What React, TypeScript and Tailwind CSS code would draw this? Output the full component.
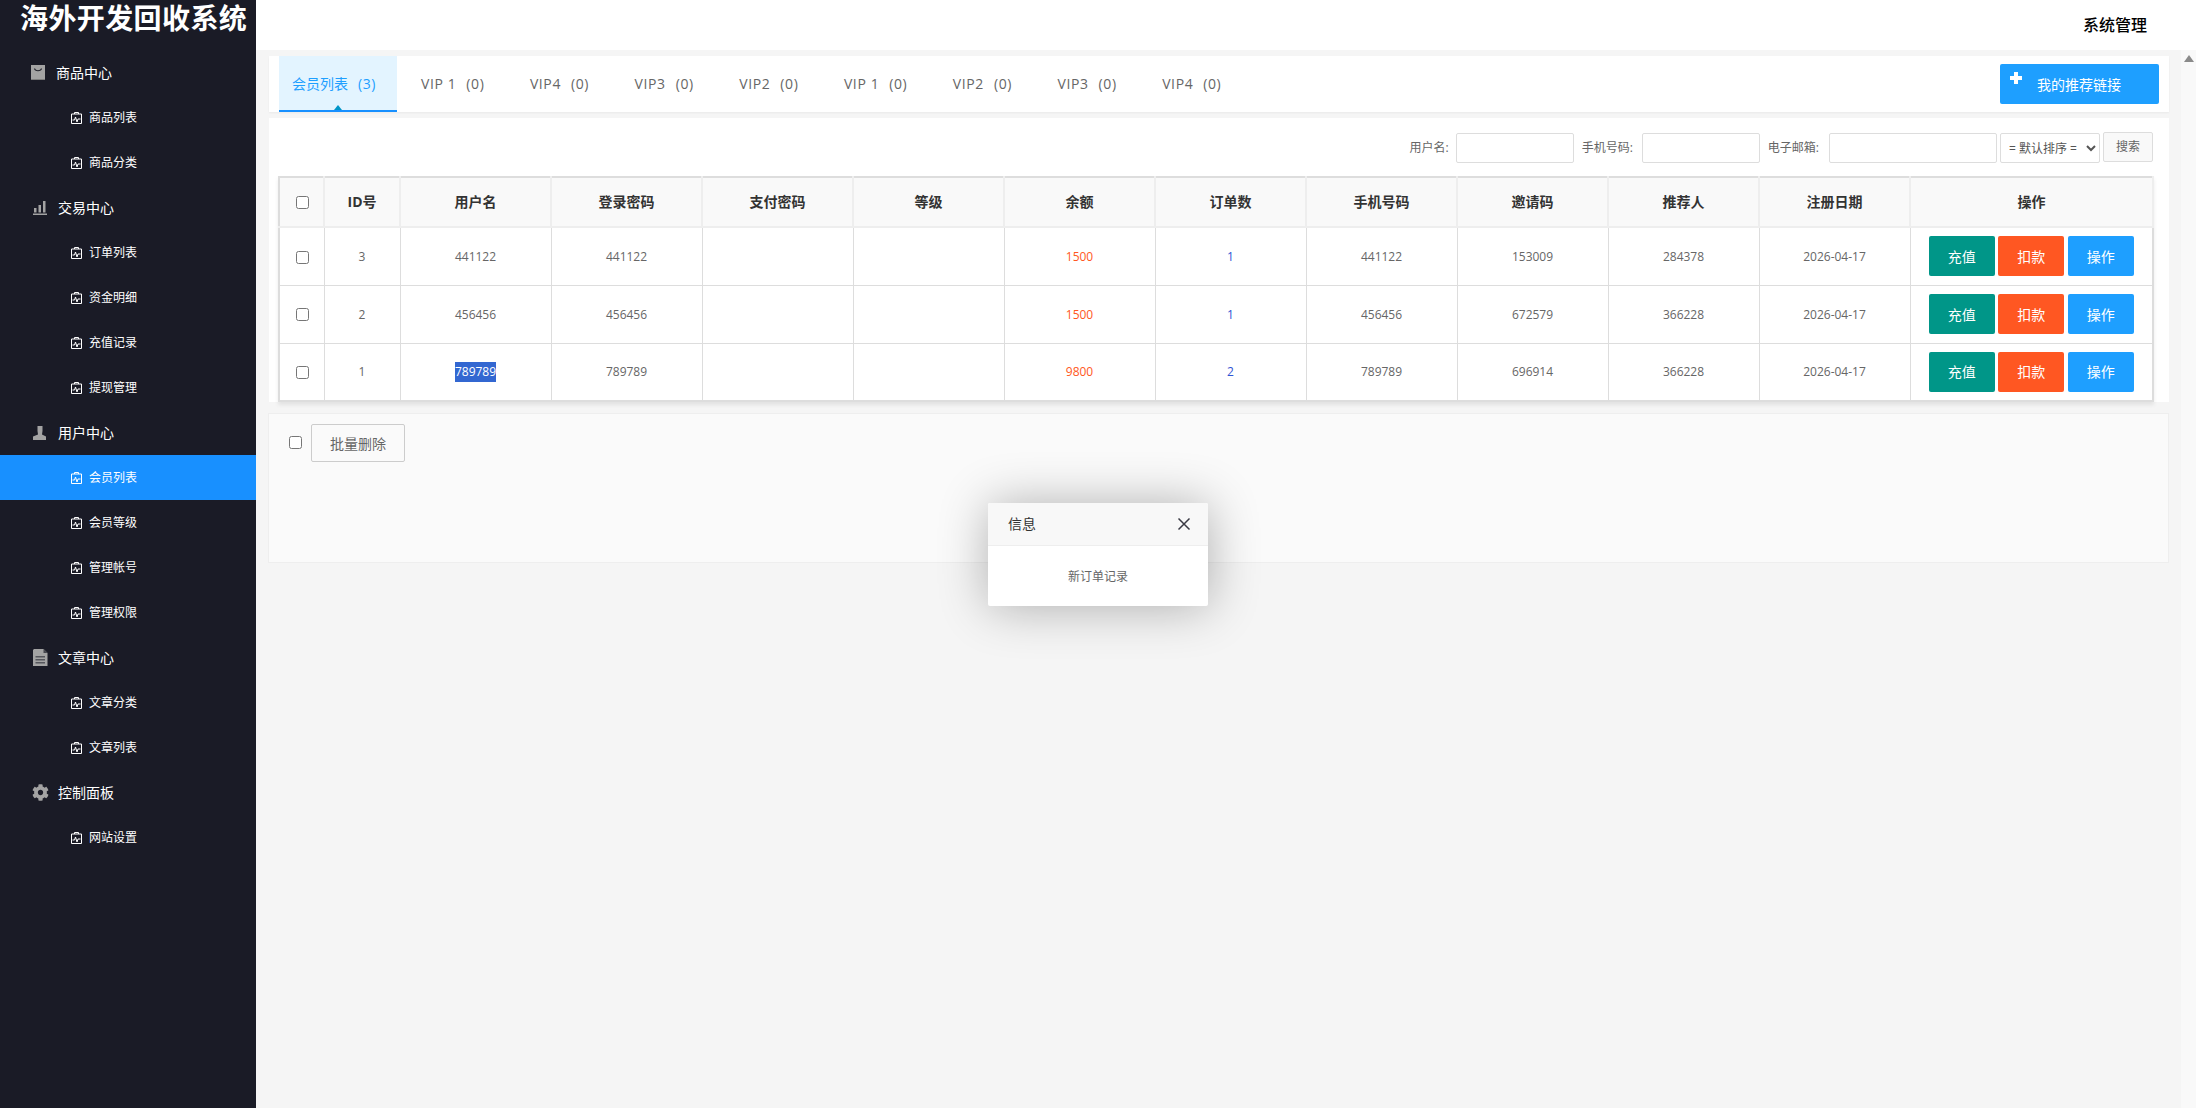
import { FC, ReactNode } from "react";
import { FaCog } from "react-icons/fa";

const BagIcon = () => (
  <svg width="15" height="16" viewBox="0 0 15 16" className="ml-[31px] mr-[10px]">
    <rect x="0" y="0" width="14" height="15" fill="#a3a3a3" />
    <rect x="0" y="14" width="14" height="1" fill="#7d7d7d" />
    <path d="M3.5 3.5c.6 3 6.4 3 7 0" fill="none" stroke="#26272f" strokeWidth="1.2" />
  </svg>
);

const BarsIcon = () => (
  <svg width="14" height="14" viewBox="0 0 14 14" className="ml-[33px] mr-[11px]">
    <rect x="1" y="7" width="2.5" height="4.5" fill="#a3a3a3" />
    <rect x="5.5" y="4" width="2.5" height="7.5" fill="#a3a3a3" />
    <rect x="10" y="0" width="2.5" height="11.5" fill="#a3a3a3" />
    <rect x="0" y="12.5" width="14" height="1.5" fill="#a3a3a3" />
  </svg>
);

const UserIcon = () => (
  <svg width="14" height="14" viewBox="0 0 14 14" className="ml-[33px] mr-[11px]">
    <path d="M4.500 0h5v5l-.5 3.500 4 2V14H.0v-3.500l5-2L4.500 5z" fill="#a3a3a3" />
  </svg>
);

const DocIcon = () => (
  <svg width="15" height="17" viewBox="0 0 15 17" className="ml-[33px] mr-[10px]">
    <path d="M1 0h9.500L14.500 4v13H0V1z" fill="#a3a3a3" />
    <path d="M10.500 0v4h4z" fill="#45464d" />
    <rect x="2.500" y="7" width="9.500" height="1.500" fill="#55565c" />
    <rect x="2.500" y="10" width="9.500" height="1.500" fill="#55565c" />
    <rect x="2.500" y="13" width="9.500" height="1.500" fill="#55565c" />
  </svg>
);

const ChildIcon = () => (
  <svg width="11" height="12" viewBox="0 0 11 12" className="ml-[71px] mr-[7px] shrink-0">
    <path d="M.5 2h10v9.500H.5zM3.500 2V.5h4V2" fill="none" stroke="#fff" strokeWidth="1" />
    <path d="M1.500 8h2l1-3 1.500 5 1-3h2.500" fill="none" stroke="#fff" strokeWidth="1" />
  </svg>
);

const menu: { label: string; icon: ReactNode; items: string[] }[] = [
  { label: "商品中心", icon: <BagIcon />, items: ["商品列表", "商品分类"] },
  { label: "交易中心", icon: <BarsIcon />, items: ["订单列表", "资金明细", "充值记录", "提现管理"] },
  { label: "用户中心", icon: <UserIcon />, items: ["会员列表", "会员等级", "管理帐号", "管理权限"] },
  { label: "文章中心", icon: <DocIcon />, items: ["文章分类", "文章列表"] },
  {
    label: "控制面板",
    icon: <FaCog size={17} color="#a3a3a3" className="ml-[32px] mr-[9px]" />,
    items: ["网站设置"],
  },
];

const tabs = ["VIP 1", "VIP4", "VIP3", "VIP2", "VIP 1", "VIP2", "VIP3", "VIP4"];

const headers = ["ID号", "用户名", "登录密码", "支付密码", "等级", "余额", "订单数", "手机号码", "邀请码", "推荐人", "注册日期", "操作"];

const rows = [
  { id: 3, name: "441122", money: 1500, orders: 1, code: "153009", ref: "284378" },
  { id: 2, name: "456456", money: 1500, orders: 1, code: "672579", ref: "366228" },
  { id: 1, name: "789789", money: 9800, orders: 2, code: "696914", ref: "366228" },
];

const Sidebar: FC = () => (
  <div className="h-full w-[256px] shrink-0 bg-[#1a1b26] text-white">
    <div className="h-[50px] whitespace-nowrap pl-[20px] text-[28px] font-bold leading-[36px] tracking-[0.4px]">海外开发回收系统</div>
    {menu.map((group) => (
      <div key={group.label}>
        <div className="flex h-[45px] items-center text-[14px]">
          {group.icon}
          <span>{group.label}</span>
        </div>
        {group.items.map((item) => (
          <div
            key={item}
            className={
              item === "会员列表"
                ? "flex h-[45px] items-center bg-[#1890ff] text-[12px]"
                : "flex h-[45px] items-center text-[12px]"
            }
          >
            <ChildIcon />
            <span>{item}</span>
          </div>
        ))}
      </div>
    ))}
  </div>
);

const TabBar: FC = () => (
  <div className="flex h-[56px] bg-white pl-[10px] pr-[10px] shadow-[0_1px_2px_rgba(0,0,0,0.05)]">
    <div className="relative flex h-full w-[118px] items-center justify-start border-b-2 border-[#1890ff] bg-[#e3f4ff] pl-[13px] text-[14px] text-[#1e9fff]">
      会员列表<span className="ml-[10px] tracking-[0.6px]">(3)</span>
      <span className="absolute bottom-0 left-[55px] h-0 w-0 border-x-[4px] border-b-[5px] border-x-transparent border-b-[#0095c8]" />
    </div>
    <div className="flex flex-1 items-center pb-px pl-[24px]">
      {tabs.map((t, i) => (
        <span key={i} className="mr-[45.500px] whitespace-pre text-[14px] tracking-[0.6px] text-[#666]">
          {t}
          <span className="ml-[10px]">(0)</span>
        </span>
      ))}
    </div>
    <button className="mt-[8px] flex h-[40px] w-[159px] items-start rounded-[2px] bg-[#1e9fff] pl-[10px] pt-[8px] text-[14px] text-white">
      <svg width="12" height="12" viewBox="0 0 12 12" className="mr-[15px] shrink-0">
        <path d="M4 0h4v4h4v4H8v4H4V8H0V4h4z" fill="#fff" />
      </svg>
      <span className="mt-[2px]">我的推荐链接</span>
    </button>
  </div>
);

const SearchBar: FC = () => (
  <div className="flex h-[58px] items-start justify-end pt-[14px] text-[12px] text-[#666]">
    <span className="mr-[7px] mt-px leading-[30px]">用户名:</span>
    <input className="mr-[8px] mt-px h-[30px] w-[118px] rounded-[2px] border border-[#ddd] bg-white" />
    <span className="mr-[9px] mt-px leading-[30px]">手机号码:</span>
    <input className="mr-[8px] mt-px h-[30px] w-[118px] rounded-[2px] border border-[#ddd] bg-white" />
    <span className="mr-[10px] mt-px leading-[30px]">电子邮箱:</span>
    <input className="mr-[3px] mt-px h-[30px] w-[168px] rounded-[2px] border border-[#ddd] bg-white" />
    <select className="mr-[3px] mt-px h-[30px] w-[100px] rounded-[2px] border border-[#ddd] bg-white pl-[4px] text-[12px] text-[#555]">
      <option>= 默认排序 =</option>
    </select>
    <button className="h-[30px] w-[50px] rounded-[2px] border border-[#ddd] bg-[#f9f9f9] text-[12px] text-[#666]">搜索</button>
  </div>
);

const Table: FC = () => (
  <table className="w-[1873px] table-fixed border-collapse border-2 border-[#ddd] shadow-[0_3px_4px_rgba(0,0,0,0.08)]">
    <colgroup>
      <col className="w-[45px]" />
      <col className="w-[76px]" />
      {rows.length > 0 &&
        Array.from({ length: 10 }).map((_, i) => <col key={i} className="w-[151px]" />)}
      <col className="w-[243px]" />
    </colgroup>
    <thead>
      <tr className="h-[50px] bg-[#f9f9f9]">
        <th className="border-2 border-[#eee] border-l-[#ddd] border-t-[#ddd] pb-[2px] pl-[2px]">
          <input type="checkbox" className="h-[13px] w-[13px] align-middle" />
        </th>
        {headers.map((h) => (
          <th key={h} className="border-2 border-[#eee] border-t-[#ddd] pb-[2px] text-[14px] font-bold text-[#333]">
            {h}
          </th>
        ))}
      </tr>
    </thead>
    <tbody className="text-center text-[12px] text-[#666]">
      {rows.map((r) => (
        <tr key={r.id} className="h-[58px]">
          <td className="border border-[#ddd] pl-[2px]">
            <input type="checkbox" className="h-[13px] w-[13px] align-middle" />
          </td>
          <td className="border border-[#ddd] pt-px">{r.id}</td>
          <td className="border border-[#ddd] pt-px">
            {r.id === 1 ? <span className="inline-block bg-[#3367d1] leading-[20px] text-white">{r.name}</span> : r.name}
          </td>
          <td className="border border-[#ddd] pt-px">{r.name}</td>
          <td className="border border-[#ddd]" />
          <td className="border border-[#ddd]" />
          <td className="border border-[#ddd] pt-px text-[#ff5722]">{r.money}</td>
          <td className="border border-[#ddd] pt-px text-[#2f55d4]">{r.orders}</td>
          <td className="border border-[#ddd] pt-px">{r.name}</td>
          <td className="border border-[#ddd] pt-px">{r.code}</td>
          <td className="border border-[#ddd] pt-px">{r.ref}</td>
          <td className="border border-[#ddd] pt-px">2026-04-17</td>
          <td className="border border-[#ddd]">
            <div className="flex items-center justify-center gap-[3.500px] text-[14px] text-white">
              <button className="h-[40px] w-[66px] rounded-[2px] bg-[#009688]">充值</button>
              <button className="h-[40px] w-[66px] rounded-[2px] bg-[#ff5722]">扣款</button>
              <button className="h-[40px] w-[66px] rounded-[2px] bg-[#1e9fff]">操作</button>
            </div>
          </td>
        </tr>
      ))}
    </tbody>
  </table>
);

const Dialog: FC = () => (
  <div className="absolute left-[988px] top-[503px] w-[220px] rounded-[2px] bg-white shadow-[1px_1px_50px_rgba(0,0,0,0.3)]">
    <div className="flex h-[43px] items-center justify-between rounded-t-[2px] border-b border-[#eee] bg-[#f8f8f8] pb-px pl-[20px] pr-[17px] text-[14px] text-[#333]">
      <span>信息</span>
      <svg width="14" height="14" viewBox="0 0 14 14">
        <path d="M1.500 1.500l11 11M12.500 1.500l-11 11" stroke="#3a3a44" strokeWidth="1.500" fill="none" />
      </svg>
    </div>
    <div className="flex h-[60px] items-center justify-center pt-[2px] text-[12px] text-[#666]">新订单记录</div>
  </div>
);

const App: FC = () => {
  return (
    <div className="relative flex h-[1108px] w-full overflow-hidden bg-[#f5f5f5] font-['Open_Sans','Noto_Sans_CJK_SC',sans-serif]">
      <Sidebar />
      <div className="flex min-w-0 flex-1 flex-col">
        <div className="flex h-[50px] shrink-0 items-center justify-end bg-white pr-[49px] text-[16px] font-medium text-black">
          系统管理
        </div>
        <div className="flex flex-1">
          <div className="min-w-0 flex-1 pl-[13px] pr-[12px] pt-[6px]">
            <TabBar />
            <div className="mt-[6px] h-[284px] bg-white pl-[9px]">
              <div className="pr-[16px]">
                <SearchBar />
              </div>
              <Table />
            </div>
            <div className="-ml-px mt-[11px] flex h-[150px] items-start border border-[#eee] bg-[#fafafa] pl-[20px] pt-[10px]">
              <input type="checkbox" className="mr-[9px] mt-[12px] h-[13px] w-[13px]" />
              <button className="h-[38px] w-[94px] rounded-[2px] border border-[#ccc] text-[14px] text-[#666]">批量删除</button>
            </div>
          </div>
          <div className="w-[15px] shrink-0 bg-[#f9f9f9] pl-[3px] pt-[5px]">
            <div className="h-0 w-0 border-x-[5px] border-b-[7px] border-x-transparent border-b-[#8a8a8a]" />
          </div>
        </div>
      </div>
      <Dialog />
    </div>
  );
};

export default App;
